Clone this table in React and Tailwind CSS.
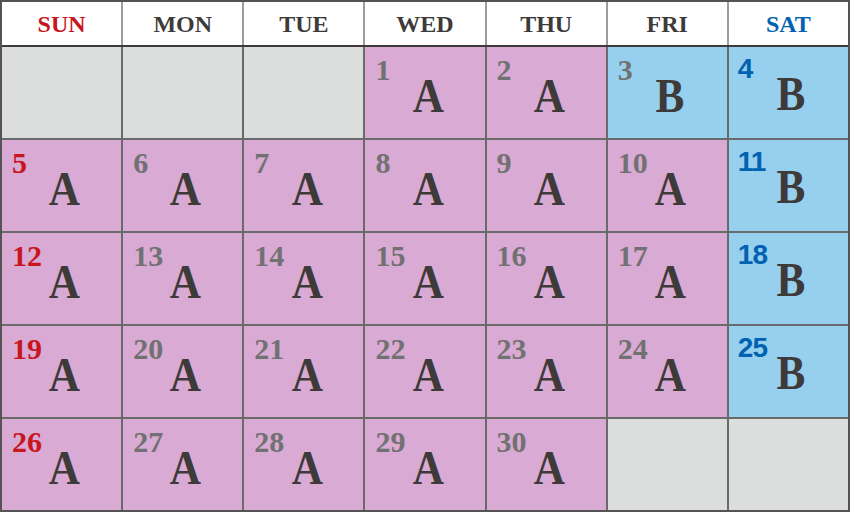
import React from 'react';

const days = ['SUN', 'MON', 'TUE', 'WED', 'THU', 'FRI', 'SAT'];

const headColor = (i) => (i === 0 ? 'text-[#c8161e]' : i === 6 ? 'text-[#0062b0]' : 'text-[#3e3a39]');

// 5 weeks, month starts on Wednesday, 30 days
const cells = Array.from({ length: 35 }, (_, i) => {
  const day = i - 2;
  if (day < 1 || day > 30) return null;
  const col = i % 7;
  const b = col === 6 || day === 3;
  return { day, col, type: b ? 'B' : 'A' };
});

function DayCell({ cell }) {
  if (!cell) return <div className="bg-[#dcdddd]" />;
  const { day, col, type } = cell;
  const bg = type === 'B' ? 'bg-[#96d0ee]' : 'bg-[#d8aad4]';
  const num =
    col === 0
      ? "text-[#c8161e] font-['Liberation_Serif',serif] text-[30px] pl-[10px]"
      : col === 6
      ? "text-[#0062b0] font-['Liberation_Sans',sans-serif] text-[28px] pl-[9px] tracking-[-1px]"
      : "text-[#727171] font-['Liberation_Serif',serif] text-[30px] pl-[10px]";
  return (
    <div className={`${bg} flex flex-col pt-[8px]`}>
      <div className={`${num} font-bold leading-none`}>{day}</div>
      <div className="mt-[-13px] pl-[6px] flex justify-center">
        <span className="text-[48px] leading-none font-bold text-[#3e3a39] inline-block scale-x-[0.9]">{type}</span>
      </div>
    </div>
  );
}

export default function App() {
  return (
    <div className="w-[850px] h-[513px] bg-white font-['Liberation_Serif',serif]">
      <div className="w-[850px] h-[512px] border-2 border-[#555353] flex flex-col">
        <div className="grid grid-cols-7 gap-x-[2px] bg-[#9c9c9c] h-[45px] border-b-2 border-[#3e3a39]">
          {days.map((d, i) => (
            <div key={d} className={`bg-white flex items-center justify-center text-[24px] font-bold ${headColor(i)}`}>
              {d}
            </div>
          ))}
        </div>
        <div className="flex-1 grid grid-cols-7 grid-rows-5 gap-[2px] bg-[#6b6a6a]">
          {cells.map((c, i) => (
            <DayCell key={i} cell={c} />
          ))}
        </div>
      </div>
    </div>
  );
}
